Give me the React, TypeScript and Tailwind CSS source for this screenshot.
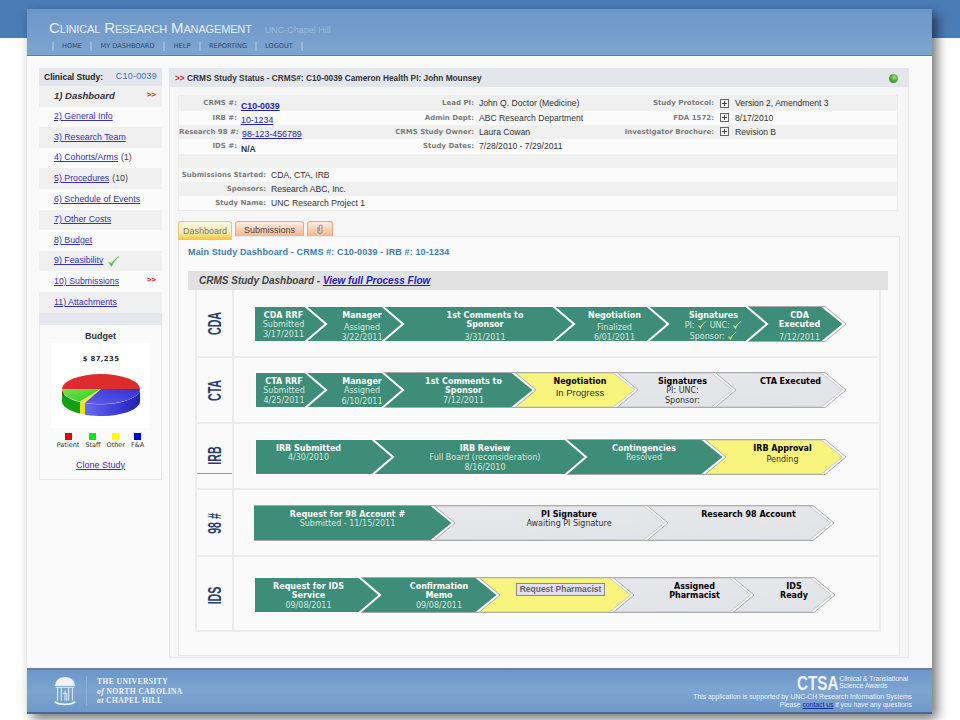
import React from "react";

type Kind = "g" | "y" | "x";
type Line = { t: React.ReactNode; b?: boolean; mt?: number };
type Stage = { end: number; kind: Kind; pt: number; lines: Line[]; shift?: number; extra?: React.ReactNode };

const DEPTH = 21;
const FILL: Record<Kind, string> = { g: "#3e8d79", y: "#f8f47e", x: "url(#grayfill)" };

function chev(x: number, top: number, bottom: number) {
  const mid = (top + bottom) / 2;
  return `0,${top} ${x},${top} ${x + DEPTH},${mid} ${x},${bottom} 0,${bottom}`;
}

function Check({ className }: { className: string }) {
  return (
    <svg viewBox="0 0 12 12" className={className}>
      <path d="M1.5 6.5 L4.2 10.5 C5.5 7 7.8 3.6 11 1.5 C8 3.2 5.7 5.6 4.3 8 Z" fill="currentColor" stroke="currentColor" strokeWidth="0.5" />
    </svg>
  );
}

function Flow({ x0, stages, ml, mt }: { x0: number; stages: Stage[]; ml: string; mt?: string }) {
  const last = stages[stages.length - 1].end;
  const width = last - x0 + DEPTH + 1;
  const shapes: React.ReactNode[] = [];
  for (let i = stages.length - 1; i >= 0; i--) {
    const s = stages[i];
    const e = s.end - x0;
    const next = stages[i + 1];
    if (s.kind === "g" && next && next.kind === "g") {
      shapes.push(<polygon key={i} points={chev(e - 1, 0, 36)} fill={FILL.g} stroke="#fff" strokeWidth="2" />);
    } else {
      shapes.push(
        <g key={i}>
          <polygon points={chev(e, 0.5, 35.5)} fill="#fff" stroke="#a9a9a9" strokeWidth="1" />
          <polygon points={chev(e - 3.5, 1, 35)} fill={FILL[s.kind]} stroke={s.kind === "g" ? "none" : "#b4b4b4"} strokeWidth="0.7" />
        </g>
      );
    }
  }
  return (
    <div className={`relative flex h-[36px] ${ml} ${mt ?? ""}`} style={{ width }}>
      <svg className="absolute inset-0" width={width} height={36}>
        <defs>
          <linearGradient id="grayfill" x1="0" x2="1" y1="0" y2="1">
            <stop offset="0" stopColor="#e9e9ec" />
            <stop offset="1" stopColor="#e2e3e8" />
          </linearGradient>
        </defs>
        {shapes}
      </svg>
      {stages.map((s, i) => {
        const start = i === 0 ? x0 : stages[i - 1].end;
        const light = s.kind === "g";
        const pad = (i === 0 ? 3 : 25) + (s.shift ?? 0);
        return (
          <div
            key={i}
            className="relative flex flex-col items-center text-center font-['DejaVu_Sans','Liberation_Sans',sans-serif] text-[8px] leading-[9.3px] whitespace-nowrap"
            style={{ width: s.end - start, paddingTop: s.pt, paddingLeft: pad > 0 ? pad : 0, paddingRight: pad < 0 ? -pad : 0 }}
          >
            {s.lines.map((l, j) => (
              <div
                key={j}
                style={{ marginTop: l.mt ?? 0 }}
                className={l.b ? (light ? "font-bold text-white" : "font-bold text-black") : light ? "text-[#d5e7df]" : "text-[#333]"}
              >
                {l.t}
              </div>
            ))}
            {s.extra}
          </div>
        );
      })}
    </div>
  );
}

function Row({ label, h, children, border = true, labelClass = "" }: { label: string; h: string; children: React.ReactNode; border?: boolean; labelClass?: string }) {
  return (
    <div className={`flex ${h} ${border ? "border-b-2 border-[#ececec]" : ""}`}>
      <div className="flex w-[37px] shrink-0 items-start border-r-2 border-[#ececec]">
        <div className={`flex w-full items-center justify-center ${labelClass}`}>
          <span className="inline-block whitespace-nowrap font-['Liberation_Sans',sans-serif] text-[19px] leading-none font-bold text-[#27406e] [transform:rotate(-90deg)_scaleX(0.56)]">
            {label}
          </span>
        </div>
      </div>
      <div className="flex flex-1 items-start">{children}</div>
    </div>
  );
}

const g = (t: React.ReactNode, mt?: number): Line => ({ t, mt });
const b = (t: React.ReactNode, mt?: number): Line => ({ t, b: true, mt });

const V = ({ c }: { c?: string }) => <Check className={`inline-block h-[10px] w-[10px] align-[-2px] ${c ?? "text-[#d9f06a]"}`} />;

const navItems = [
  { t: "HOME", w: "w-[38px]" },
  { t: "MY DASHBOARD", w: "w-[73px]" },
  { t: "HELP", w: "w-[36px]" },
  { t: "REPORTING", w: "w-[56px]" },
  { t: "LOGOUT", w: "w-[46px]" },
];

const sideItems: { n: React.ReactNode; active?: boolean; extra?: string; check?: boolean; arrow?: boolean }[] = [
  { n: "1) Dashboard", active: true, arrow: true },
  { n: "2) General Info" },
  { n: "3) Research Team" },
  { n: "4) Cohorts/Arms", extra: "(1)" },
  { n: "5) Procedures", extra: "(10)" },
  { n: "6) Schedule of Events" },
  { n: "7) Other Costs" },
  { n: "8) Budget" },
  { n: "9) Feasibility", check: true },
  { n: "10) Submissions", arrow: true },
  { n: "11) Attachments" },
];

function Plus() {
  return (
    <svg width="9" height="9" viewBox="0 0 9 9" className="shrink-0">
      <rect x="0.5" y="0.5" width="8" height="8" fill="#f4f4f4" stroke="#666" />
      <path d="M4.5 2 V7 M2 4.5 H7" stroke="#444" strokeWidth="1" />
    </svg>
  );
}

const lab = "font-['DejaVu_Sans',sans-serif] text-[7px] font-bold text-[#7c7c7c] text-right whitespace-nowrap";
const val = "font-['Liberation_Sans',sans-serif] text-[8.6px] text-[#333] whitespace-nowrap";
const lnk = "font-['Liberation_Sans',sans-serif] text-[8.8px] text-[#2222bb] underline whitespace-nowrap";

function InfoRow({ odd, h, children }: { odd: boolean; h: string; children?: React.ReactNode }) {
  return <div className={`flex items-center ${h} ${odd ? "bg-[#f0f0f0]" : "bg-[#fbfbfb]"}`}>{children}</div>;
}

function Cols({ l1, v1, l2, v2, l3, v3 }: { l1: string; v1: React.ReactNode; l2: string; v2: string; l3?: string; v3?: string }) {
  return (
    <>
      <div className={`${lab} w-[58px]`}>{l1}</div>
      <div className="w-[144px] pl-[4px]">{v1}</div>
      <div className={`${lab} w-[93px]`}>{l2}</div>
      <div className={`${val} w-[126px] pl-[5px]`}>{v2}</div>
      {l3 ? <div className={`${lab} w-[114px]`}>{l3}</div> : null}
      {l3 ? (
        <div className="flex items-center pl-[6px]">
          <Plus />
          <span className={`${val} pl-[6px]`}>{v3}</span>
        </div>
      ) : null}
    </>
  );
}

function Pie() {
  return (
    <svg width="99" height="85" viewBox="51 342 99 85" className="block">
      <defs>
        <linearGradient id="blueSide" x1="0" x2="1" y1="0" y2="0">
          <stop offset="0" stopColor="#6a6af0" />
          <stop offset="0.6" stopColor="#3b3bd8" />
          <stop offset="1" stopColor="#2222a8" />
        </linearGradient>
        <linearGradient id="blueTop" x1="0" x2="1" y1="1" y2="0">
          <stop offset="0" stopColor="#5c5cf2" />
          <stop offset="1" stopColor="#3333cc" />
        </linearGradient>
        <linearGradient id="greenTop" x1="0" x2="1" y1="0" y2="1">
          <stop offset="0" stopColor="#7ae04a" />
          <stop offset="1" stopColor="#22d022" />
        </linearGradient>
      </defs>
      <text x="101" y="360" textAnchor="middle" fontFamily="'DejaVu Sans',sans-serif" fontSize="7" fontWeight="bold" letterSpacing="0.3" fill="#333">
        $ 87,235
      </text>
      <path d="M62 388 V399 A39 15 0 0 0 80 412.6 V401 A39 15 0 0 1 62 388 Z" fill="#14a014" />
      <path d="M62 388 V392 A39 15 0 0 0 64 396 V394 Z" fill="#b02020" />
      <path d="M80 401 V412.6 A39 15 0 0 0 85 413.7 V402 A39 15 0 0 1 80 401 Z" fill="#e8e820" />
      <path d="M85 402 V413.7 A39 15 0 0 0 140 399 V388 A39 15 0 0 1 85 402 Z" fill="url(#blueSide)" />
      <path d="M101 388 L62 388 A39 15 0 0 1 140 388 Z" fill="#dd2c2c" />
      <path d="M101 388 L62 388 A39 15 0 0 0 80 400.6 Z" fill="url(#greenTop)" />
      <path d="M101 388 L80 400.6 A39 15 0 0 0 85 401.7 Z" fill="#f0f030" />
      <path d="M101 388 L85 401.7 A39 15 0 0 0 140 388 Z" fill="url(#blueTop)" />
    </svg>
  );
}

function Well() {
  return (
    <svg width="24" height="31" viewBox="0 0 26 32" className="shrink-0">
      <g fill="none" stroke="#eef3fa" strokeWidth="1">
        <path d="M3 9 C3 3 8 1 13 1 C18 1 23 3 23 9" fill="#eef3fa" />
        <path d="M2 9.5 H24 M3 11.5 H23" />
        <path d="M5 12 V26 M9 12 V26 M13 15 V26 M17 12 V26 M21 12 V26" />
        <path d="M11 18 H15 V26" />
        <path d="M2 27 C6 31 20 31 24 27" strokeWidth="2" />
      </g>
    </svg>
  );
}

export default function App() {
  return (
    <div className="h-[720px] w-[960px] overflow-hidden bg-[linear-gradient(#4a7cb8_38px,#ffffff_38px)] pt-[9px] pl-[27px] font-['Liberation_Sans',sans-serif]">
      <div className="flex h-[705px] w-[905px] flex-col bg-[#f9f9fa] shadow-[5px_5px_11px_rgba(0,0,0,0.55)]">
        {/* Header */}
        <header className="flex h-[47px] shrink-0 flex-col border-b border-[#5c7ba5] bg-[linear-gradient(#6b97c8,#7fa4d1)] pl-[22px]">
          <div className="flex items-baseline pt-[9px] leading-[20px]">
            <span className="text-[15px] tracking-[-0.15px] text-[#e6edf6] [font-variant:small-caps]">Clinical Research Management</span>
            <span className="pl-[13px] text-[9px] text-[#9db8d9]">UNC-Chapel Hill</span>
          </div>
          <nav className="mt-[2px] ml-[3px] flex self-start border-r-2 border-[#9ab8da]">
            {navItems.map((n) => (
              <div key={n.t} className={`${n.w} border-l-2 border-[#9ab8da] text-center font-['DejaVu_Sans',sans-serif] text-[6.6px] leading-[9px] text-[#2e4a70]`}>
                {n.t}
              </div>
            ))}
          </nav>
        </header>

        {/* Body */}
        <div className="flex flex-1 items-start gap-[7px] pt-[12px] pl-[12px]">
          {/* Sidebar */}
          <aside className="w-[123px] shrink-0 bg-[#fafafa]">
            <div className="flex h-[18px] items-center justify-between bg-[#e4e6ee] pr-[5px] pl-[5px]">
              <span className="text-[8.5px] font-bold text-[#222]">Clinical Study:</span>
              <span className="text-[9px] tracking-[0.2px] text-[#3a72b5]">C10-0039</span>
            </div>
            {sideItems.map((s, i) => (
              <div key={i} className={`relative flex h-[20.6px] items-center pl-[15px] text-[8.8px] ${i % 2 === 0 ? "bg-[#f0f0f1]" : "bg-[#fbfbfb]"}`}>
                {s.active ? <span className="text-[9.5px] font-bold italic text-[#333]">{s.n}</span> : <span className="text-[#3333b5] underline">{s.n}</span>}
                {s.extra ? <span className="pl-[3px] text-[#444]">{s.extra}</span> : null}
                {s.check ? <Check className="ml-[4px] h-[13px] w-[13px] text-[#46b048]" /> : null}
                {s.arrow ? <span className="absolute top-[3px] right-[6px] text-[8px] font-bold text-[#e02020]">&gt;&gt;</span> : null}
              </div>
            ))}
            <div className="h-[12px] bg-[#e4e6ee]" />
            <div className="flex h-[155px] flex-col items-center border border-t-0 border-[#eaeaea] pt-[5px]">
              <div className="text-[9px] leading-[12px] font-bold text-[#333]">Budget</div>
              <div className="mt-[1px] bg-white">
                <Pie />
              </div>
              <div className="mt-[5px] flex gap-[6px] font-['DejaVu_Sans',sans-serif] text-[6.5px] text-[#333]">
                {[
                  ["Patient", "bg-[#ee0000]"],
                  ["Staff", "bg-[#00ee00]"],
                  ["Other", "bg-[#ffff00]"],
                  ["F&A", "bg-[#0000dd]"],
                ].map(([t, c]) => (
                  <div key={t} className="flex flex-col items-center">
                    <div className={`h-[7px] w-[7px] ${c}`} />
                    <div className="mt-[1px] leading-[9px]">{t}</div>
                  </div>
                ))}
              </div>
              <div className="mt-[9px] text-[9px] text-[#3333b5] underline">Clone Study</div>
            </div>
          </aside>

          {/* Main */}
          <main className="h-[590px] w-[740px] shrink-0 border border-[#e6e6e6] bg-[#f6f6f7]">
            <div className="flex h-[18px] items-center justify-between bg-[#e4e6ee] pr-[10px] pl-[5px] text-[8.3px] font-bold text-[#333]">
              <span>
                <span className="text-[#e02020]">&gt;&gt;</span> CRMS Study Status - CRMS#: C10-0039 Cameron Health PI: John Mounsey
              </span>
              <span className="h-[9px] w-[9px] rounded-full bg-[radial-gradient(circle_at_60%_35%,#a5e07a,#3a9a2a_60%)]" />
            </div>

            <div className="mt-[8px] ml-[8px] w-[720px] border border-[#ececec] bg-[#fbfbfb]">
              <InfoRow odd h="h-[15px]">
                <Cols l1="CRMS #:" v1={<span className={`${lnk} font-bold`}>C10-0039</span>} l2="Lead PI:" v2="John Q. Doctor (Medicine)" l3="Study Protocol:" v3="Version 2, Amendment 3" />
              </InfoRow>
              <InfoRow odd={false} h="h-[14px]">
                <Cols l1="IRB #:" v1={<span className={lnk}>10-1234</span>} l2="Admin Dept:" v2="ABC Research Department" l3="FDA 1572:" v3="8/17/2010" />
              </InfoRow>
              <InfoRow odd h="h-[14px]">
                <Cols l1="Research 98 #:" v1={<span className={`${lnk} pl-[1px]`}>98-123-456789</span>} l2="CRMS Study Owner:" v2="Laura Cowan" l3="Investigator Brochure:" v3="Revision B" />
              </InfoRow>
              <InfoRow odd={false} h="h-[15px]">
                <Cols l1="IDS #:" v1={<span className={`${val} font-bold`}>N/A</span>} l2="Study Dates:" v2="7/28/2010 - 7/29/2011" />
              </InfoRow>
              <InfoRow odd h="h-[14px]" />
              <InfoRow odd={false} h="h-[14px]">
                <div className={`${lab} w-[87px]`}>Submissions Started:</div>
                <div className={`${val} pl-[5px]`}>CDA, CTA, IRB</div>
              </InfoRow>
              <InfoRow odd h="h-[14px]">
                <div className={`${lab} w-[87px]`}>Sponsors:</div>
                <div className={`${val} pl-[5px]`}>Research ABC, Inc.</div>
              </InfoRow>
              <InfoRow odd={false} h="h-[14px]">
                <div className={`${lab} w-[87px]`}>Study Name:</div>
                <div className={`${val} pl-[5px]`}>UNC Research Project 1</div>
              </InfoRow>
            </div>

            {/* Tabs */}
            <div className="relative z-10 mt-[10px] ml-[8px] flex h-[15px] items-start gap-[3px] text-[9px]">
              <div className="flex h-[19px] w-[54px] items-start justify-center rounded-t-[3px] border border-b-0 border-[#e8c878] bg-[linear-gradient(#fbf8e6,#f8eaa8_60%,#f5c52e)] pt-[3px] text-[#777]">Dashboard</div>
              <div className="flex h-[15px] w-[69px] items-start justify-center rounded-t-[3px] border border-b-0 border-[#eeaa80] bg-[linear-gradient(#fbeee6,#f6b68c)] pt-[2px] text-[#444]">Submissions</div>
              <div className="flex h-[15px] w-[26px] items-center justify-center rounded-t-[3px] border border-b-0 border-[#eeaa80] bg-[linear-gradient(#fbeee6,#f6b68c)]">
                <svg width="6" height="10" viewBox="0 0 6 10" fill="none" stroke="#888" strokeWidth="1">
                  <path d="M1 3 V7.5 A2 2 0 0 0 5 7.5 V2.5 A1.4 1.4 0 0 0 2.2 2.5 V7" />
                </svg>
              </div>
            </div>

            <div className="ml-[8px] h-[420px] w-[722px] border border-[#e8e8e8] bg-[#fafafa] pt-[9px]">
              <div className="pl-[9px] text-[9px] leading-[12px] font-bold tracking-[0.13px] text-[#3f7cb2]">Main Study Dashboard - CRMS #: C10-0039 - IRB #: 10-1234</div>
              <div className="mt-[13px] ml-[9px] flex h-[19px] w-[700px] items-center bg-[#e1e1e1] pl-[11px] text-[10px] font-bold italic text-[#444]">
                CRMS Study Dashboard -&nbsp;<span className="text-[#2222bb] underline">View full Process Flow</span>
              </div>
              <div className="ml-[16px] w-[686px] border-x-2 border-b-2 border-[#ececec] bg-[#fafafa]">
                <Row label="CDA" h="h-[68px]" labelClass="h-[66px]">
                  <Flow
                    x0={254}
                    ml="ml-[20px]"
                    mt="mt-[16px]"
                    stages={[
                      { end: 306, kind: "g", pt: 5, shift: 4, lines: [b("CDA RRF"), g("Submitted"), g("3/17/2011")] },
                      { end: 383, kind: "g", pt: 5, shift: 10, lines: [b("Manager"), g("Assigned", 3), g("3/22/2011")] },
                      { end: 554, kind: "g", pt: 5, shift: 8, lines: [b("1st Comments to"), b("Sponsor"), g("3/31/2011", 3)] },
                      { end: 648, kind: "g", pt: 5, shift: 2, lines: [b("Negotiation"), g("Finalized", 3), g("6/01/2011")] },
                      {
                        end: 747,
                        kind: "g",
                        pt: 5,
                        shift: 7,
                        lines: [b("Signatures"), g(<>PI: <V /> UNC: <V /></>), g(<>Sponsor: <V /></>)],
                      },
                      { end: 825, kind: "g", pt: 5, shift: 2, lines: [b("CDA"), b("Executed"), g("7/12/2011", 3)] },
                    ]}
                  />
                </Row>
                <Row label="CTA" h="h-[66px]" labelClass="h-[64px]">
                  <Flow
                    x0={255}
                    ml="ml-[21px]"
                    mt="mt-[14px]"
                    stages={[
                      { end: 306, kind: "g", pt: 5, shift: 4, lines: [b("CTA RRF"), g("Submitted"), g("4/25/2011")] },
                      { end: 383, kind: "g", pt: 5, shift: 10, lines: [b("Manager"), g("Assigned"), g("6/10/2011", 1)] },
                      { end: 515, kind: "g", pt: 5, shift: 4, lines: [b("1st Comments to"), b("Sponsor"), g("7/12/2011")] },
                      { end: 617, kind: "y", pt: 5, shift: 3, lines: [b("Negotiation"), { t: <span className="font-['Liberation_Sans',sans-serif] text-[9.5px]">In Progress</span>, mt: 2 }] },
                      { end: 715, kind: "x", pt: 5, shift: 8, lines: [b("Signatures"), g("PI: UNC:"), g("Sponsor:")] },
                      { end: 825, kind: "x", pt: 5, shift: 16, lines: [b("CTA Executed")] },
                    ]}
                  />
                </Row>
                <Row label="IRB" h="h-[66px]" labelClass="h-[50px] border-b border-[#999] pt-[14px]">
                  <Flow
                    x0={255}
                    ml="ml-[21px]"
                    mt="mt-[15px]"
                    stages={[
                      { end: 373, kind: "g", pt: 5, shift: -14, lines: [b("IRB Submitted"), g("4/30/2010")] },
                      { end: 566, kind: "g", pt: 5, shift: 6, lines: [b("IRB Review"), g("Full Board (reconsideration)"), g("8/16/2010")] },
                      { end: 705, kind: "g", pt: 5, shift: -8, lines: [b("Contingencies"), g("Resolved")] },
                      { end: 825, kind: "y", pt: 5, shift: 10, lines: [b("IRB Approval"), g("Pending", 2)] },
                    ]}
                  />
                </Row>
                <Row label="98 #" h="h-[67px]" labelClass="h-[66px]">
                  <Flow
                    x0={254}
                    ml="ml-[20px]"
                    mt="mt-[15px]"
                    stages={[
                      { end: 434, kind: "g", pt: 5, shift: 4, lines: [b("Request for 98 Account #"), g("Submitted - 11/15/2011")] },
                      { end: 647, kind: "x", pt: 5, shift: 32, lines: [b("PI Signature"), g("Awaiting PI Signature")] },
                      { end: 813, kind: "x", pt: 5, shift: 12, lines: [b("Research 98 Account")] },
                    ]}
                  />
                </Row>
                <Row label="IDS" h="h-[73px]" border={false} labelClass="h-[76px]">
                  <Flow
                    x0={254}
                    ml="ml-[20px]"
                    mt="mt-[20px]"
                    stages={[
                      { end: 360, kind: "g", pt: 5, lines: [b("Request for IDS"), b("Service"), g("09/08/2011")] },
                      { end: 479, kind: "g", pt: 5, shift: 14, lines: [b("Confirmation"), b("Memo"), g("09/08/2011")] },
                      {
                        end: 613,
                        kind: "y",
                        pt: 6,
                        shift: 4,
                        lines: [],
                        extra: (
                          <div className="border border-[#888] bg-[#e2e0f2] px-[3px] font-['Liberation_Sans',sans-serif] text-[8.5px] leading-[11px] font-bold text-[#666]">
                            Request Pharmacist
                          </div>
                        ),
                      },
                      { end: 733, kind: "x", pt: 5, shift: 18, lines: [b("Assigned"), b("Pharmacist")] },
                      { end: 814, kind: "x", pt: 5, shift: 16, lines: [b("IDS"), b("Ready")] },
                    ]}
                  />
                </Row>
              </div>
            </div>
          </main>
        </div>

        {/* Footer */}
        <footer className="flex h-[46px] shrink-0 items-center justify-between border-t-2 border-b-2 border-t-[#6d7f99] border-b-[#4e6688] bg-[linear-gradient(#6b97c8,#7fa4d1_50%,#6f99c9)] pr-[20px] pl-[26px]">
          <div className="flex items-center">
            <Well />
            <div className="ml-[9px] h-[30px] w-px bg-[#8fb0d6]" />
            <div className="pt-[1px] pl-[10px] font-['Liberation_Serif',serif] text-[7.5px] leading-[9.6px] font-bold tracking-[0.45px] text-[#eef3fa]">
              <div>THE UNIVERSITY</div>
              <div><i>of</i> NORTH CAROLINA</div>
              <div><i>at</i> CHAPEL HILL</div>
            </div>
          </div>
          <div className="flex flex-col items-end pt-[1px] text-[#eef3fa]">
            <div className="flex items-center gap-[2px] pr-[4px]">
              <span className="inline-block w-[40px] origin-left whitespace-nowrap text-[20px] leading-[17px] font-bold [transform:scaleX(0.76)]">CTSA</span>
              <span className="text-[6.8px] leading-[6.8px]">
                Clinical &amp; Translational
                <br />
                Science Awards
              </span>
            </div>
            <div className="mt-[1px] text-[6.8px] leading-[8px]">This application is supported by UNC-CH Research Information Systems</div>
            <div className="text-[6.8px] leading-[8px]">
              Please <span className="text-[#1a2ca0] underline">contact us</span> if you have any questions
            </div>
          </div>
        </footer>
      </div>
    </div>
  );
}
